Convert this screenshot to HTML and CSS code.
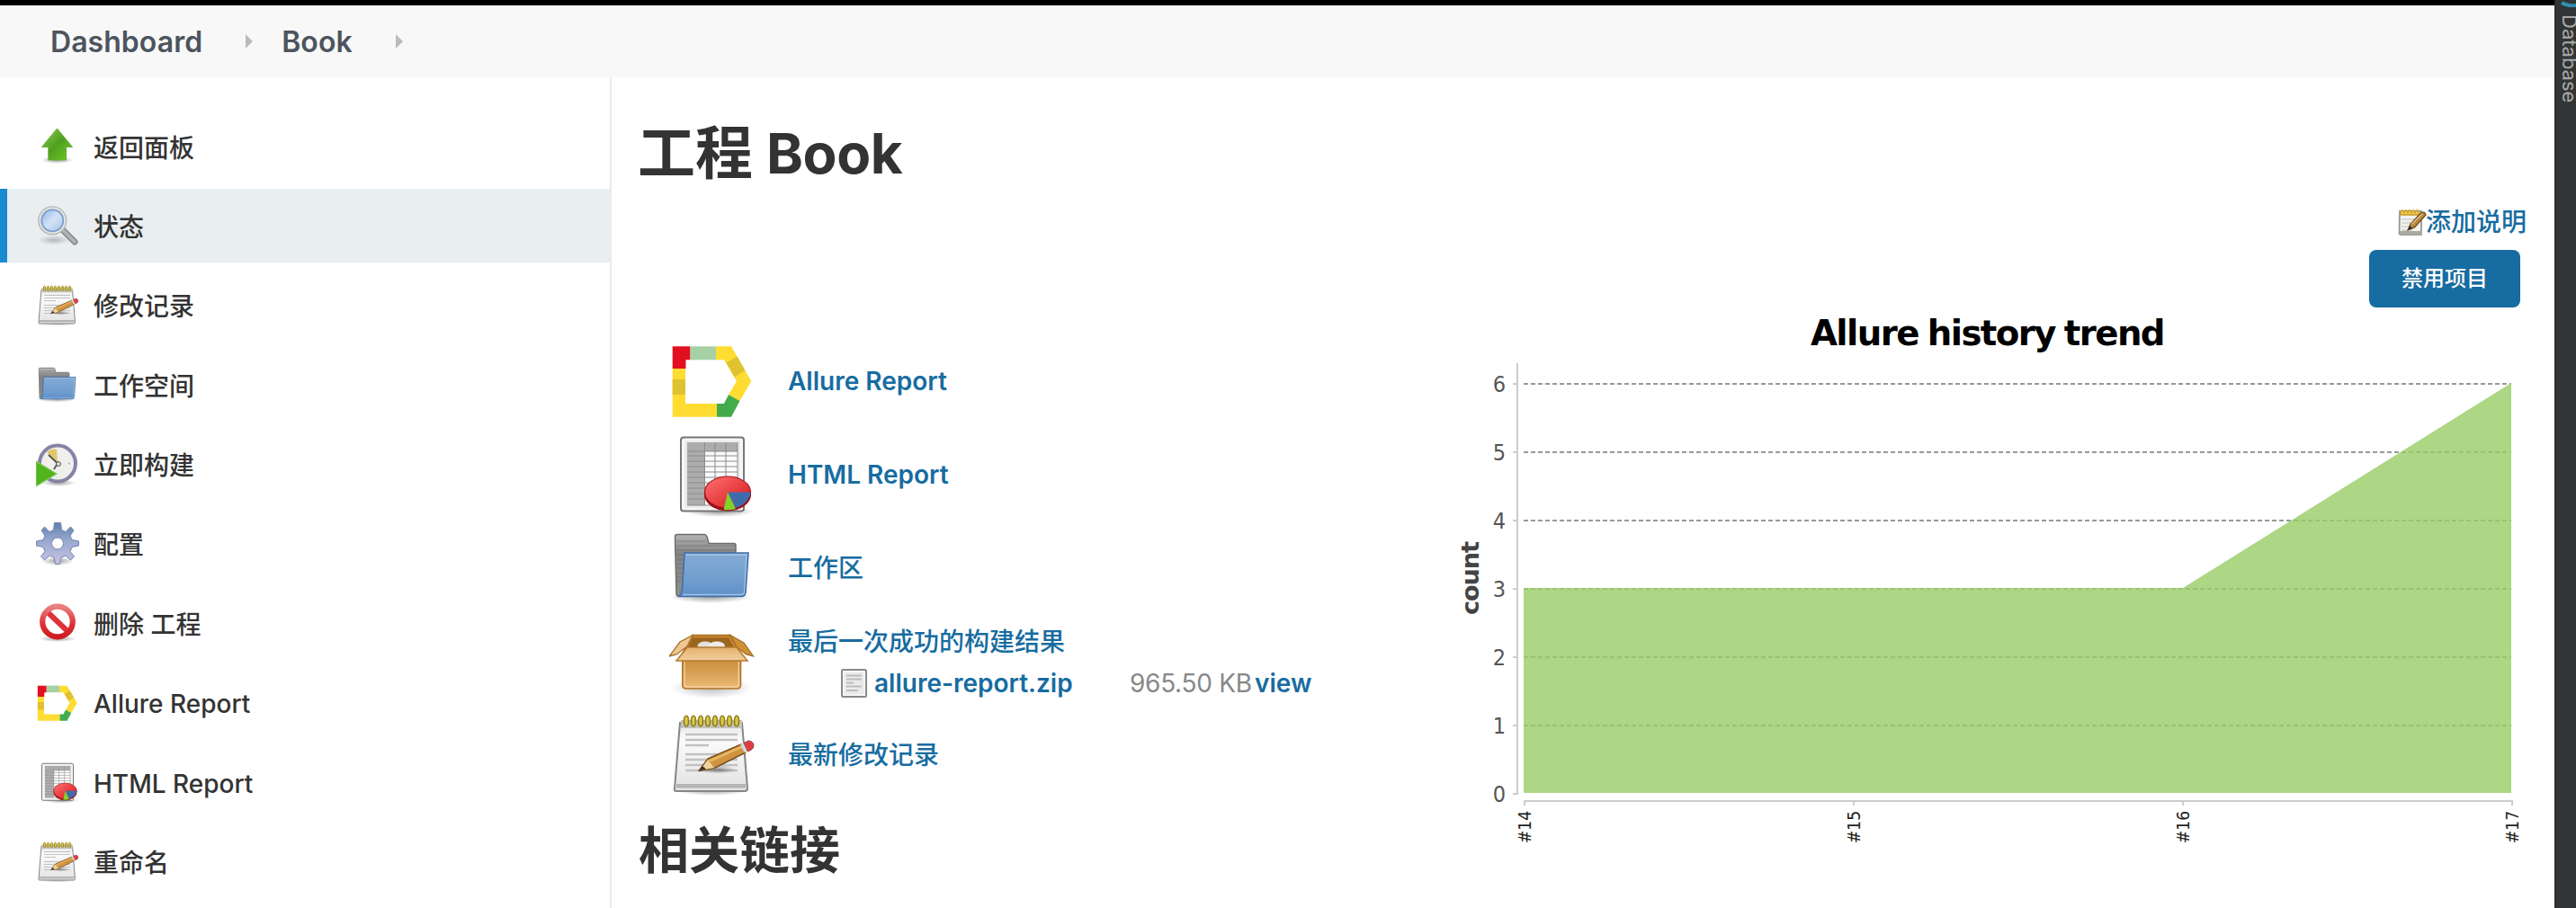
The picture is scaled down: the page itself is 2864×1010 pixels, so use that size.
FILE: index.html
```html
<!DOCTYPE html>
<html lang="zh-CN">
<head>
<meta charset="utf-8">
<title>Book</title>
<link rel="stylesheet" href="styles.css">
</head>
<body>
<svg width="0" height="0" class="defs" aria-hidden="true">
  <defs>
    <linearGradient id="gArrow" x1="0" y1="0" x2="1" y2="1"><stop offset="0" stop-color="#8fd052"/><stop offset=".5" stop-color="#4f9f20"/><stop offset="1" stop-color="#6fd01f"/></linearGradient>
    <linearGradient id="gLens" x1="0" y1="0" x2="1" y2="1"><stop offset="0" stop-color="#8fb4e6"/><stop offset=".5" stop-color="#d3e3f6"/><stop offset="1" stop-color="#a4c3ea"/></linearGradient>
    <linearGradient id="gBlue" x1="0" y1="0" x2="0" y2="1"><stop offset="0" stop-color="#85abd4"/><stop offset=".6" stop-color="#719fcf"/><stop offset="1" stop-color="#5d8fc8"/></linearGradient>
    <linearGradient id="gGray" x1="0" y1="0" x2="0" y2="1"><stop offset="0" stop-color="#b4b4b4"/><stop offset=".3" stop-color="#858585"/><stop offset="1" stop-color="#8e8e8e"/></linearGradient>
    <linearGradient id="gPaper" x1="0" y1="0" x2="0" y2="1"><stop offset="0" stop-color="#e4e4e4"/><stop offset=".25" stop-color="#fbfbfb"/><stop offset="1" stop-color="#e2e2e2"/></linearGradient>
    <linearGradient id="gGear" x1="0" y1="0" x2="0" y2="1"><stop offset="0" stop-color="#5f7fac"/><stop offset=".45" stop-color="#9aaad2"/><stop offset="1" stop-color="#c9c3e2"/></linearGradient>
    <linearGradient id="gRed" x1="0" y1="0" x2="0" y2="1"><stop offset="0" stop-color="#e98080"/><stop offset=".6" stop-color="#dc2f35"/><stop offset="1" stop-color="#cf1c22"/></linearGradient>
    <linearGradient id="gBox" x1="0" y1="0" x2="0" y2="1"><stop offset="0" stop-color="#c98c3c"/><stop offset=".4" stop-color="#d69c50"/><stop offset="1" stop-color="#eabb78"/></linearGradient>
    <linearGradient id="gFlap" x1="0" y1="0" x2="0" y2="1"><stop offset="0" stop-color="#e3b06c"/><stop offset="1" stop-color="#f1cf9f"/></linearGradient>
    <linearGradient id="gPie" x1="0" y1="0" x2="1" y2="1"><stop offset="0" stop-color="#ff7272"/><stop offset="1" stop-color="#d4151b"/></linearGradient>
    <radialGradient id="gShadow"><stop offset="0" stop-color="#000" stop-opacity=".38"/><stop offset="1" stop-color="#000" stop-opacity="0"/></radialGradient>

    <symbol id="i-up" viewBox="0 0 48 48">
      <ellipse cx="23.500" cy="39" rx="18" ry="4" fill="url(#gShadow)"/>
      <path d="M23.500 4L40.500 24.500H33.500V39H13.800V24.500H6.500z" fill="url(#gArrow)" stroke="#68ad3c" stroke-width="1"/>
    </symbol>
    <symbol id="i-search" viewBox="0 0 48 48">
      <ellipse cx="20" cy="40" rx="18" ry="5.500" fill="url(#gShadow)" opacity=".6"/>
      <path d="M30 29L43 42" stroke="#8c8c8c" stroke-width="7" stroke-linecap="round"/>
      <path d="M30 29L43 42" stroke="#b4b4b4" stroke-width="3.500" stroke-linecap="round"/>
      <circle cx="18.300" cy="18.300" r="15.500" fill="#e3e3e0" stroke="#b5b5b2" stroke-width="1.300"/>
      <circle cx="18.300" cy="18.300" r="12" fill="url(#gLens)" stroke="#7b9dd0" stroke-width="1.800"/>
    </symbol>
    <symbol id="i-note" viewBox="0 0 96 96">
      <ellipse cx="48" cy="87" rx="40" ry="6" fill="url(#gShadow)"/>
      <path d="M12 12H81L87 85Q87 88 84 88H8Q5 88 6 85z" fill="url(#gPaper)" stroke="#858585" stroke-width="2"/>
      <path d="M13 9H81V18H13z" fill="#c4c3ba"/>
      <path d="M8 80H85V84.500H8z" fill="#b4b4b4"/>
      <path d="M18 25H76M18 31H76M18 37H44M18 47H76M18 53H76M18 59H76M18 65H76" stroke="#c1c1c1" stroke-width="2.400"/>
      <g fill="#dcc94a" stroke="#8d7d18" stroke-width="1.600"><ellipse cx="19" cy="10" rx="2.500" ry="5.800"/><ellipse cx="27" cy="10" rx="2.500" ry="5.800"/><ellipse cx="35" cy="10" rx="2.500" ry="5.800"/><ellipse cx="43" cy="10" rx="2.500" ry="5.800"/><ellipse cx="51" cy="10" rx="2.500" ry="5.800"/><ellipse cx="59" cy="10" rx="2.500" ry="5.800"/><ellipse cx="67" cy="10" rx="2.500" ry="5.800"/><ellipse cx="75" cy="10" rx="2.500" ry="5.800"/></g>
      <ellipse cx="54" cy="64" rx="20" ry="5" fill="url(#gShadow)"/>
      <path d="M33 65.500L43 52L80 36L85 45L50 62.500z" fill="#cf9440" stroke="#7c5217" stroke-width="1.500" stroke-linejoin="round"/>
      <path d="M34 65L43 53L50 62z" fill="#efd2a0"/><path d="M33 65.500L37 60L41 63.500z" fill="#333"/>
      <path d="M44 55L81 38.500" stroke="#e9b665" stroke-width="2.500"/>
      <path d="M79 36.500L83 34.500L88 43.500L84 45.500z" fill="#d8d8d8"/>
      <path d="M83 34.500L88 32Q93 32 94 37Q94 40 92 41.500L87.500 44z" fill="#e33a44" stroke="#8c4a3f" stroke-width="1"/>
    </symbol>
    <symbol id="i-folder" viewBox="0 0 96 96">
      <ellipse cx="46" cy="80" rx="46" ry="7" fill="url(#gShadow)"/>
      <path d="M6.500 13Q6.500 10.500 9 10.500H39Q41 10.500 42 13L44 20.500H72Q74 20.500 74 23V70L10 79Q8 79 8 76z" fill="url(#gGray)" stroke="#6d6d6d" stroke-width="1.500"/>
      <path d="M9 18H41M9 23H73M9 28H73M9 33H16M9 38H16M9 43H15M9 48H15M9 53H14M9 58H14M9 63H13" stroke="#6c6c6c" stroke-width="1" opacity=".65"/>
      <path d="M17 31H88L85 75Q84.500 79.500 80 79.500H11Q14 77 14.500 71z" fill="url(#gBlue)" stroke="#3f6dab" stroke-width="1.600"/>
      <path d="M18.500 33H86L83.500 75Q83 77.500 80 77.500H15" fill="none" stroke="#b4cce8" stroke-width="1.300" opacity=".8"/>
    </symbol>
    <symbol id="i-clock" viewBox="0 0 48 48">
      <ellipse cx="25" cy="44" rx="19" ry="4" fill="url(#gShadow)"/>
      <circle cx="24" cy="22.500" r="20" fill="#efefec" stroke="#8583a6" stroke-width="4"/>
      <path d="M24 22L12 10Q18 5 23 7z" fill="#e2c668"/>
      <path d="M14 13L24 22.500L20 29" fill="none" stroke="#4e4e52" stroke-width="1.800"/>
      <circle cx="25" cy="23" r="2.500" fill="#ddd" stroke="#555"/>
      <circle cx="37" cy="22.500" r="1" fill="#aaa"/>
      <path d="M0 20L23 34L0 48z" fill="#4fb41d" stroke="#8bcb60" stroke-width="1.200"/>
    </symbol>
    <symbol id="i-gear" viewBox="0 0 48 48">
      <ellipse cx="24" cy="43" rx="18" ry="5" fill="url(#gShadow)"/>
      <g fill="url(#gGear)" stroke="#7484ad" stroke-width="1">
        <path fill-rule="evenodd" d="M20.500 .5H27.500L28.500 8.500L33 10.500L38.500 5L42 9L38 15L40 19.500L47.500 21V26L40 27.500L38 32.500L42.500 38L38.500 42L33 37L28 39L26.500 46.500H21.500L20 39L15 37L9.500 42L5.500 38L10 32.500L8 27.500L.5 26V21L8 19.500L10 15L6 9L9.500 5L15 10.500L19.500 8.500zM24 17A6.500 6.500 0 1 0 24 30A6.500 6.500 0 1 0 24 17z"/>
      </g>
    </symbol>
    <symbol id="i-stop" viewBox="0 0 48 48">
      <ellipse cx="24" cy="41.500" rx="21" ry="3.500" fill="url(#gShadow)"/>
      <path d="M13 12L35 33" stroke="#dc3238" stroke-width="6"/>
      <circle cx="24" cy="22.500" r="16.800" fill="none" stroke="url(#gRed)" stroke-width="6.200"/>
    </symbol>
    <symbol id="i-allure" viewBox="0 0 96 96">
      <path d="M3.700 34H18V73H53V87.700H3.700z" fill="#ffdc32"/>
      <path d="M3.700 46H18V63H3.700z" fill="#dfc22f"/>
      <path d="M3.700 9.300H23.500V24.300H18.500V34H3.700z" fill="#e2101f"/>
      <path d="M23.500 9.300H52V24.300H23.500z" fill="#a6d1a4"/>
      <path d="M52 9.300H69L91.300 48L78.500 70L66 63L75 48L61 24.300H52z" fill="#ffdc32"/>
      <path d="M63.500 27.500L75.500 20.500L84.500 36L72.500 43.500z" fill="#dfc22f"/>
      <path d="M66 63L78.500 70L69 87.700H53V73H61z" fill="#43ab4c"/>
    </symbol>
    <symbol id="i-report" viewBox="0 0 96 96">
      <ellipse cx="56" cy="89" rx="38" ry="6" fill="url(#gShadow)"/>
      <rect x="13" y="6.500" width="70" height="82" rx="3" fill="#f6f6f6" stroke="#777" stroke-width="2"/>
      <rect x="17" y="10" width="62" height="75" fill="#ececec"/>
      <rect x="20" y="12" width="56" height="70" fill="#fafafa"/>
      <path d="M20 12H76V22H40V82H20z" fill="#acacac"/>
      <path d="M20 22H76M20 27H76M20 33H76M20 39H76M20 45H76M20 51H76M20 57H76M20 63H76M20 69H76M20 75H76M20 82H76M39.500 12V82M51 12V82M63 12V82M76 12V82" stroke="#8c8c8c" stroke-width="1"/>
      <ellipse cx="65" cy="70" rx="26" ry="18.500" fill="#9c0d12"/>
      <ellipse cx="65" cy="67.500" rx="25.500" ry="17.500" fill="url(#gPie)" stroke="#a11419" stroke-width="1.200"/>
      <path d="M65 67.500H90.500Q89 80 74 85z" fill="#3e6cab"/>
      <path d="M65 67.500L74 86Q67 88 60.500 87z" fill="#7fd32c"/>
    </symbol>
    <symbol id="i-box" viewBox="0 0 96 96">
      <ellipse cx="47" cy="77" rx="45" ry="12" fill="url(#gShadow)" opacity=".7"/>
      <path d="M26 18.500H68L80 40H14z" fill="#c4842e" stroke="#a86f24" stroke-width="1.500"/>
      <path d="M26 21.500H66L73 34H20z" fill="#9a651c"/>
      <ellipse cx="40" cy="30.500" rx="8.500" ry="5" fill="#e3e1dc"/><ellipse cx="53" cy="30.500" rx="9" ry="5" fill="#eeece8"/>
      <path d="M26 18.500L12 26L0 42L8 40L20 31z" fill="#eec794" stroke="#a5702a" stroke-width="1.300"/>
      <path d="M68 18.500L83 27L93.500 42L86 40L76 33z" fill="#cf8f35" stroke="#a5702a" stroke-width="1.300"/>
      <path d="M14.800 44H79.500V74Q79.500 78 75.500 78H19Q14.800 78 14.800 74z" fill="url(#gBox)" stroke="#b4762a" stroke-width="1.600"/>
      <path d="M17 48V73Q17 76 20 76H74.500Q77.300 76 77.300 73V48" fill="none" stroke="#f3d3a2" stroke-width="1.300"/>
      <path d="M20 32H75L87 47H8z" fill="url(#gFlap)" stroke="#b57a30" stroke-width="1.500"/>
    </symbol>
    <symbol id="i-doc" viewBox="0 0 32 32">
      <rect x="2" y="1" width="27" height="30" rx="1.500" fill="#fafafa" stroke="#888" stroke-width="2"/>
      <rect x="4.500" y="3.500" width="22" height="25" fill="#eaeaea"/>
      <path d="M7 7.500H24M7 11.500H24M7 15.500H15M7 19.500H24M7 24H20" stroke="#bdbdbd" stroke-width="1.800"/>
    </symbol>
    <symbol id="i-edit" viewBox="0 0 32 32">
      <path d="M2 4H26V30H3Q1.500 30 1.500 28z" fill="#f1f1ee" stroke="#989890" stroke-width="1.800"/>
      <path d="M4 13H22M4 17H20M4 21H18M4 25H16" stroke="#d2d2cc" stroke-width="1.300"/>
      <path d="M2 26H27V30.500H2z" fill="#a9a9a0"/>
      <path d="M3 5.500Q5 0 7 5.500Q9 0 11 5.500Q13 0 15 5.500Q17 0 19 5.500Q21 0 23 5.500L24 8H3z" fill="#edcc55" stroke="#c99c22" stroke-width="1.300"/>
      <path d="M11 25L14 18L26 5.500Q30 4 31 8L18.500 22z" fill="#bb8840" stroke="#6e4a1c" stroke-width="1.200"/>
      <path d="M15 18.500L27 7" stroke="#e0bb80" stroke-width="1.500"/><path d="M11 25L13 20L16.500 23z" fill="#333"/>
    </symbol>
  </defs>
</svg>

<div class="window">
  <div class="page">
    <header class="crumbs"><a>Dashboard</a><i></i><a>Book</a><i></i></header>
    <div class="body">
      <nav class="side">
        <a class="task"><svg><use href="#i-up"/></svg><span>返回面板</span></a>
        <a class="task active"><svg><use href="#i-search"/></svg><span>状态</span></a>
        <a class="task"><svg><use href="#i-note"/></svg><span>修改记录</span></a>
        <a class="task"><svg><use href="#i-folder"/></svg><span>工作空间</span></a>
        <a class="task"><svg><use href="#i-clock"/></svg><span>立即构建</span></a>
        <a class="task"><svg><use href="#i-gear"/></svg><span>配置</span></a>
        <a class="task"><svg><use href="#i-stop"/></svg><span>删除 工程</span></a>
        <a class="task"><svg><use href="#i-allure"/></svg><span>Allure Report</span></a>
        <a class="task"><svg><use href="#i-report"/></svg><span>HTML Report</span></a>
        <a class="task"><svg><use href="#i-note"/></svg><span>重命名</span></a>
      </nav>
      <main class="main">
        <div class="info">
          <h1>工程<span class="name">Book</span></h1>
          <div class="links">
            <div class="link"><svg><use href="#i-allure"/></svg><a>Allure Report</a></div>
            <div class="link"><svg><use href="#i-report"/></svg><a>HTML Report</a></div>
            <div class="link"><svg><use href="#i-folder"/></svg><a class="zh">工作区</a></div>
            <div class="link"><svg><use href="#i-box"/></svg>
              <div class="artifacts">
                <a class="zh">最后一次成功的构建结果</a>
                <div class="file"><svg><use href="#i-doc"/></svg><a class="zip">allure-report.zip</a><span class="size">965.50 KB</span><a class="view">view</a></div>
              </div>
            </div>
            <div class="link"><svg><use href="#i-note"/></svg><a class="zh">最新修改记录</a></div>
          </div>
          <h2>相关链接</h2>
        </div>
        <div class="aside">
          <a class="describe"><svg><use href="#i-edit"/></svg>添加说明</a>
          <button class="disable">禁用项目</button>
          <svg class="chart" viewBox="1600 342 1200 608">
            <text class="title" x="2013" y="384" textLength="393" lengthAdjust="spacingAndGlyphs">Allure history trend</text>
            <g class="grid"><path d="M1694 427H2792M1694 503H2792M1694 579H2792M1694 655H2792M1694 731H2792M1694 807H2792"/></g>
            <path class="area" d="M1694 654H2427L2792 426V882H1694z"/>
            <path class="axis" d="M1687 404V884M1682 427H1687M1682 503H1687M1682 579H1687M1682 655H1687M1682 731H1687M1682 807H1687M1682 883H1687M1694 891H2794M1695 891V896M2061 891V896M2427 891V896M2793 891V896"/>
            <g class="nums" text-anchor="end"><text x="1674" y="436">6</text><text x="1674" y="512">5</text><text x="1674" y="588">4</text><text x="1674" y="664">3</text><text x="1674" y="740">2</text><text x="1674" y="816">1</text><text x="1674" y="892">0</text></g>
            <g class="ticks"><text transform="translate(1702 938) rotate(-90)" textLength="36" lengthAdjust="spacingAndGlyphs">#14</text><text transform="translate(2068 938) rotate(-90)" textLength="36" lengthAdjust="spacingAndGlyphs">#15</text><text transform="translate(2434 938) rotate(-90)" textLength="36" lengthAdjust="spacingAndGlyphs">#16</text><text transform="translate(2800 938) rotate(-90)" textLength="36" lengthAdjust="spacingAndGlyphs">#17</text></g>
            <text class="ylabel" transform="translate(1644 684) rotate(-90)" textLength="81" lengthAdjust="spacingAndGlyphs">count</text>
          </svg>
        </div>
      </main>
    </div>
  </div>
  <div class="tool">
    <svg viewBox="0 0 24 10"><path d="M2 3Q10 8 24 5" fill="none" stroke="#2f8fb0" stroke-width="4"/></svg>
    <span>Database</span>
  </div>
</div>
</body>
</html>
```
FILE: styles.css
```css
* { box-sizing: border-box; margin: 0; padding: 0; }
html, body { width: 2864px; height: 1010px; overflow: hidden; }
body { background: #fff; color: #333; font: 28px/40px Inter, "Noto Sans CJK SC", sans-serif; }
svg { display: block; flex: none; overflow: visible; }
.defs { position: absolute; }
.window { display: flex; height: 1010px; }
.page { flex: 1; min-width: 0; border-top: 6px solid #000; }
.crumbs { display: flex; align-items: center; height: 80px; padding-top: 1px; padding-left: 56px; background: #f8f8f8; color: #4d545d; font-size: 32px; font-weight: 600; letter-spacing: 0.05px; }
.crumbs i { margin: 0 32px 2px 48px; border: solid transparent; border-width: 8px 0 8px 8px; border-left-color: #bbb; }
.body { display: flex; height: 924px; }
.side { width: 680px; padding-top: 36px; border-right: 2px solid #e6ecef; }
.task { display: flex; align-items: center; gap: 16px; height: 82px; margin-bottom: 6.4px; padding-left: 40px; font-weight: 500; }
.task svg { width: 48px; height: 48px; }
.task span { padding-top: 3px; }
.task.active { padding-left: 32px; border-left: 8px solid #1b8ad3; background: #e9eef1; }
.main { display: flex; flex: 1; min-width: 0; padding-left: 31px; }
.info { width: 889px; flex: none; }
h1 { height: 134px; margin-top: 38px; margin-bottom: 118px; margin-left: -2px; font-size: 64px; line-height: 92px; font-weight: 700; }
.name { margin-left: 15px; font-size: 62px; letter-spacing: -0.4px; }
.links { padding-left: 33px; }
.link { display: flex; align-items: center; gap: 36px; height: 96px; margin-bottom: 8px; color: #176ca1; font-weight: 600; }
.link svg { width: 96px; height: 96px; }
.link .zh { font-weight: 500; }
.artifacts > a { display: block; height: 47px; line-height: 48px; }
.file { display: flex; align-items: center; height: 46px; padding-left: 58px; }
.file svg { width: 32px; height: 32px; }
.zip { width: 284px; margin-left: 6px; }
.size { width: 139px; color: #888; font-weight: 400; letter-spacing: -0.3px; }
h2 { margin-top: 18px; margin-left: -1px; font-size: 56px; line-height: 80px; font-weight: 700; }
.aside { display: flex; flex-direction: column; align-items: flex-end; flex: 1; padding: 141px 31px 0 0; }
.describe { display: flex; align-items: center; height: 40px; color: #176ca1; font-weight: 500; }
.describe svg { width: 32px; height: 32px; margin-right: -1px; }
.disable { width: 168px; height: 64px; margin: 11px 7px 0 0; border: 0; border-radius: 8px; background: #176ca1; color: #fff; font: 500 24px/40px Inter, "Noto Sans CJK SC", sans-serif; }
.chart { width: 1200px; height: 608px; margin-right: 9px; }
.chart text { font-family: "DejaVu Sans Condensed", "DejaVu Sans", sans-serif; }
.chart .title { font-family: "DejaVu Sans", sans-serif; font-size: 39px; font-weight: 700; letter-spacing: -1.6px; word-spacing: -2px; fill: #000; }
.grid path { fill: none; stroke: #999; stroke-width: 2; stroke-dasharray: 5 3; }
.area { fill: #99cc66; fill-opacity: .8; }
.axis { fill: none; stroke: #ccc; stroke-width: 2; }
.nums { font-size: 25px; fill: #555; }
.ticks { font-size: 20px; fill: #222; }
.chart .ylabel { font-size: 27px; font-weight: 700; letter-spacing: -1px; fill: #444; }
.tool { width: 24px; flex: none; overflow: hidden; background: #323435; border-left: 2px solid #2b2d2e; color: #a9a9a9; }
.tool svg { width: 24px; height: 10px; margin-left: 4px; }
.tool span { display: block; width: 24px; margin: 6px 0 0 5px; writing-mode: vertical-rl; font-size: 22px; line-height: 28px; white-space: nowrap; }
```
